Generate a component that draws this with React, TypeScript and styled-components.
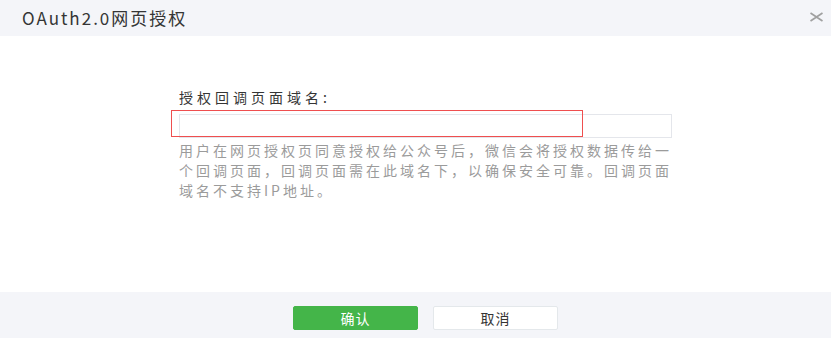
import React from "react"
import styled, { createGlobalStyle } from "styled-components"

const GlobalStyle = createGlobalStyle`
  html, body {
    margin: 0;
    padding: 0;
    background: #ffffff;
  }
  body {
    font-family: "Noto Sans CJK SC", "Noto Sans", sans-serif;
  }
`

const Dialog = styled.div`
  width: 831px;
  height: 338px;
  display: flex;
  flex-direction: column;
  background: #ffffff;
`

const Header = styled.div`
  height: 34px;
  flex-shrink: 0;
  display: flex;
  align-items: center;
  justify-content: space-between;
  padding: 0 7px 2px 22px;
  background: #f4f5f9;
`

const Title = styled.h3`
  margin: 0;
  font-size: 17px;
  font-weight: 400;
  letter-spacing: 2px;
  color: #353535;
`

const Close = styled.button`
  border: 0;
  background: none;
  padding: 0;
  width: 16px;
  height: 12px;
  display: flex;
  align-items: center;
  justify-content: center;
  cursor: pointer;
`

const Body = styled.div`
  flex: 1;
  padding: 51px 0 0 179px;
`

const Label = styled.label`
  display: block;
  font-size: 14px;
  line-height: 20px;
  letter-spacing: 4px;
  color: #353535;
`

const FieldWrap = styled.div`
  position: relative;
  margin-top: 7px;
  width: 493px;
`

const Input = styled.input`
  display: block;
  box-sizing: border-box;
  width: 493px;
  height: 24px;
  border: 1px solid #e4e6eb;
  outline: none;
  padding: 0 8px;
  font-size: 14px;
  background: #ffffff;
`

const Highlight = styled.div`
  position: absolute;
  left: -8px;
  top: -4px;
  width: 412px;
  height: 27px;
  box-sizing: border-box;
  border: 1.5px solid #ef4f4f;
  pointer-events: none;
`

const Help = styled.p`
  margin: 2px 0 0;
  width: 500px;
  font-size: 14px;
  line-height: 20px;
  letter-spacing: 3px;
  color: #9b9b9b;
`

const Footer = styled.div`
  height: 46px;
  flex-shrink: 0;
  display: flex;
  justify-content: center;
  align-items: flex-start;
  gap: 15px;
  padding: 14px 0 0 20px;
  box-sizing: border-box;
  background: #f4f5f9;
`

const Button = styled.button<{ primary?: boolean }>`
  width: 125px;
  height: 24px;
  box-sizing: border-box;
  border-radius: 2px;
  font-family: inherit;
  font-size: 14px;
  letter-spacing: 1px;
  line-height: 22px;
  padding: 0;
  cursor: pointer;
  background: ${p => (p.primary ? "#44b549" : "#ffffff")};
  color: ${p => (p.primary ? "#ffffff" : "#353535")};
  border: 1px solid ${p => (p.primary ? "#44b549" : "#e4e8eb")};
`

const App = () => (
  <>
    <GlobalStyle />
    <Dialog>
      <Header>
        <Title>OAuth2.0网页授权</Title>
        <Close aria-label="关闭">
          <svg width="15" height="10" viewBox="0 0 15 10">
            <path d="M1.5 1 L13.5 9 M13.5 1 L1.5 9" stroke="#a0a0a0" strokeWidth="1.7" fill="none" />
          </svg>
        </Close>
      </Header>
      <Body>
        <Label>授权回调页面域名:</Label>
        <FieldWrap>
          <Input type="text" />
          <Highlight />
        </FieldWrap>
        <Help>
          用户在网页授权页同意授权给公众号后，微信会将授权数据传给一个回调页面，回调页面需在此域名下，以确保安全可靠。回调页面域名不支持IP地址。
        </Help>
      </Body>
      <Footer>
        <Button primary>确认</Button>
        <Button>取消</Button>
      </Footer>
    </Dialog>
  </>
)

export default App
